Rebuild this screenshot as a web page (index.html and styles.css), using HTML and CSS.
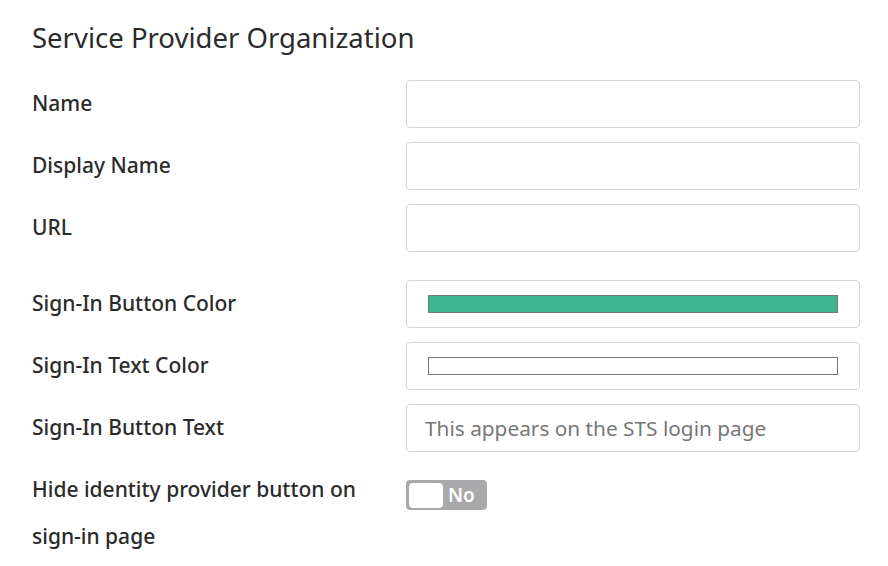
FILE: index.html
```html
<!DOCTYPE html>
<html>
<head>
<meta charset="utf-8">
<link rel="stylesheet" href="styles.css">
</head>
<body>
<div class="page">
  <h2 class="title">Service Provider Organization</h2>
  <div class="group">
    <div class="row">
      <label class="label">Name</label>
      <div class="field"></div>
    </div>
    <div class="row">
      <label class="label">Display Name</label>
      <div class="field"></div>
    </div>
    <div class="row">
      <label class="label">URL</label>
      <div class="field"></div>
    </div>
  </div>
  <div class="group second">
    <div class="row">
      <label class="label">Sign-In Button Color</label>
      <div class="field color"><span class="swatch green"></span></div>
    </div>
    <div class="row">
      <label class="label">Sign-In Text Color</label>
      <div class="field color"><span class="swatch white"></span></div>
    </div>
    <div class="row">
      <label class="label">Sign-In Button Text</label>
      <div class="field text"><span class="placeholder">This appears on the STS login page</span></div>
    </div>
    <div class="row">
      <label class="label">Hide identity provider button on sign-in page</label>
      <div class="toggle"><span class="knob"></span><span class="toggle-text">No</span></div>
    </div>
  </div>
</div>
</body>
</html>
```
FILE: styles.css
```css
* { box-sizing: border-box; }
body {
  margin: 0;
  background: #fff;
  font-family: "Noto Sans", "Open Sans", sans-serif;
  color: #333;
}
.page {
  padding: 21px 28px 0 32px;
}
.title {
  margin: 0 0 25px 0;
  font-size: 27.5px;
  font-weight: 400;
  line-height: 34px;
  color: #2b2b2b;
}
.group {
  display: flex;
  flex-direction: column;
  gap: 14px;
}
.group.second {
  margin-top: 28px;
}
.row {
  display: grid;
  grid-template-columns: 374px 454px;
  align-items: start;
}
.label {
  font-size: 21px;
  font-weight: 500;
  line-height: 47px;
  color: #2b2b2b;
  padding-right: 10px;
}
.field {
  height: 48px;
  border: 1px solid #d4d4d4;
  border-radius: 4px;
  background: #fff;
}
.field.color {
  display: flex;
  align-items: center;
  padding: 0 21px;
}
.swatch {
  display: block;
  width: 100%;
  height: 18px;
  border: 1px solid #777;
}
.swatch.green { background: #3db690; }
.swatch.white { background: #fff; }
.field.text {
  display: flex;
  align-items: center;
  padding: 0 18px;
}
.placeholder {
  font-size: 20.8px;
  color: #777;
  font-weight: 400;
}
.toggle {
  margin-top: 14px;
  width: 81px;
  height: 30px;
  background: #a9a9ab;
  border-radius: 4px;
  display: flex;
  align-items: center;
  padding: 3px;
}
.knob {
  width: 34px;
  height: 25px;
  background: #fff;
  border-radius: 4px;
}
.toggle-text {
  color: #fff;
  font-size: 19px;
  font-weight: 600;
  margin-left: 5px;
}
```
